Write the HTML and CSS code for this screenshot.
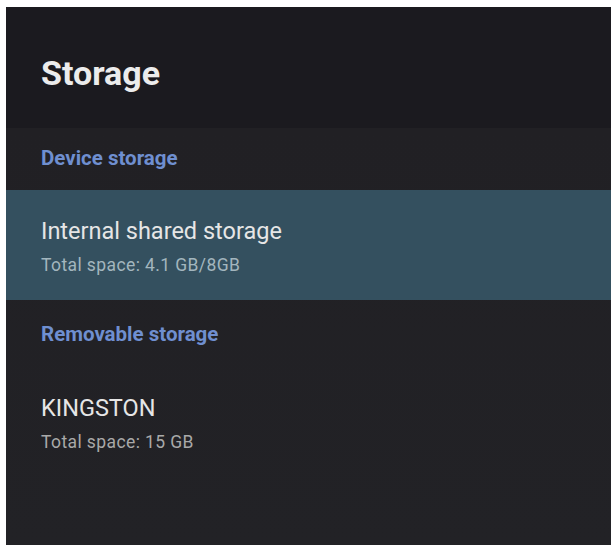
FILE: index.html
```html
<!DOCTYPE html>
<html lang="en">
<head>
    <meta charset="UTF-8">
    <meta name="viewport" content="width=device-width, initial-scale=1.0">
    <title>Storage</title>
    <link rel="stylesheet" href="styles.css">
</head>
<body>
    <div class="screen">
        <div class="header">
            <h1>Storage</h1>
        </div>

        <div class="list">
            <div class="section-title">Device storage</div>
            <div class="item focused">
                <div class="item-title">Internal shared storage</div>
                <div class="item-sub">Total space: 4.1 GB/8GB</div>
            </div>

            <div class="section-title after-focus">Removable storage</div>
            <div class="item last">
                <div class="item-title">KINGSTON</div>
                <div class="item-sub">Total space: 15 GB</div>
            </div>
        </div>
    </div>
</body>
</html>
```

FILE: styles.css
```css
* {
    margin: 0;
    padding: 0;
    box-sizing: border-box;
    font-family: Roboto, 'Noto Sans', sans-serif;
}

body {
    background: #ffffff;
    height: 545px;
    overflow: hidden;
}

.screen {
    margin: 7px 1px 0 6px;
    height: 538px;
    background: #222226;
    display: flex;
    flex-direction: column;
}

.header {
    background: #1b1a1f;
    height: 121px;
    padding: 46px 0 0 35px;
}

h1 {
    color: #ececec;
    font-size: 34px;
    font-weight: 700;
    line-height: 40px;
}

.list {
    flex: 1;
    background: linear-gradient(180deg, #212024 0%, #222226 100%);
}

.section-title {
    color: #6f8fd0;
    font-size: 20.5px;
    font-weight: 700;
    line-height: 22px;
    padding: 19px 0 0 35px;
    height: 62px;
}

.section-title.after-focus {
    padding-top: 23px;
}

.item {
    height: 110px;
    padding: 27px 0 0 35px;
}

.item.focused {
    background: #34505f;
}

.item-title {
    color: #e6e6e6;
    font-size: 23.5px;
    line-height: 28px;
}

.item-sub {
    color: #a9a9a9;
    font-size: 17.5px;
    letter-spacing: 0.4px;
    line-height: 22px;
    margin-top: 9px;
}

.item.focused .item-sub {
    color: #a3b6be;
}

.item.last {
    padding-top: 32px;
}
```
